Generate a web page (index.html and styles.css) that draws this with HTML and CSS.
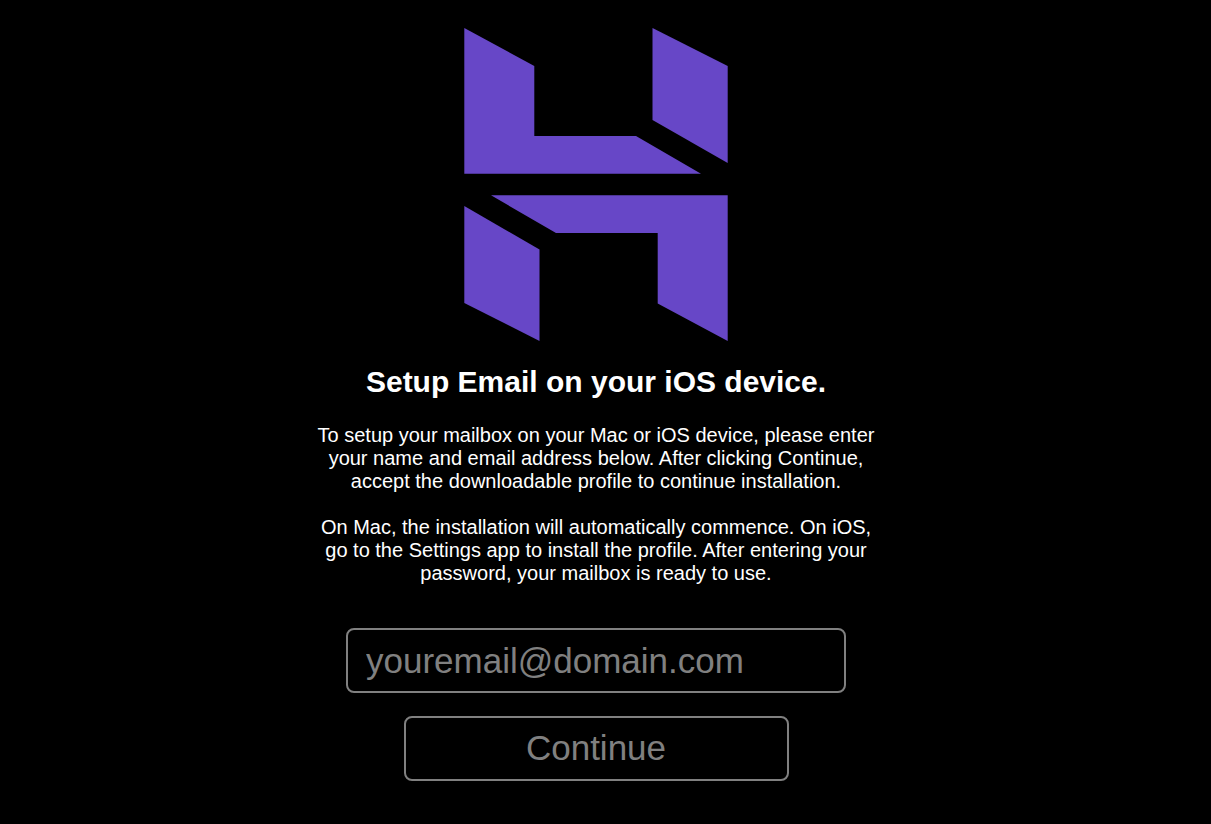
FILE: index.html
```html
<!DOCTYPE html>
<html lang="en">
<head>
<meta charset="utf-8">
<meta name="viewport" content="width=device-width, initial-scale=1">
<title>Setup Email</title>
<link rel="stylesheet" href="styles.css">
</head>
<body>
<main class="page">
  <svg class="logo" viewBox="0 0 264 313" role="img" aria-label="Logo">
    <path d="M0.300 0L70.300 38V108H172L237 145.700H0.300Z"/>
    <path d="M188.500 0L263.700 38V135L188.500 92Z"/>
    <path d="M263.700 313L193.700 275.500V205H92L27 167.300H263.700Z"/>
    <path d="M75.500 313L0.300 275V178L75.500 221.500Z"/>
  </svg>
  <h1 class="title">Setup Email on your iOS device.</h1>
  <p class="text">To setup your mailbox on your Mac or iOS device, please enter your name and email address below. After clicking Continue, accept the downloadable profile to continue installation.</p>
  <p class="text">On Mac, the installation will automatically commence. On iOS, go to the Settings app to install the profile. After entering your password, your mailbox is ready to use.</p>
  <form class="form">
    <input class="field" type="email" placeholder="youremail@domain.com" aria-label="Email address">
    <button class="submit" type="submit">Continue</button>
  </form>
</main>
</body>
</html>
```
FILE: styles.css
```css
* {
  box-sizing: border-box;
}

body {
  margin: 0;
  background: #000;
  color: #fff;
  font-family: "Liberation Sans", Arial, sans-serif;
}

.page {
  display: flex;
  flex-direction: column;
  align-items: center;
  padding: 28px 19px 40px 0;
}

.logo {
  width: 264px;
  fill: #6747c7;
}

.title {
  margin: 24px 0 26px;
  font-size: 30px;
  line-height: 33px;
  text-align: center;
}

.text {
  max-width: 560px;
  margin: 0 0 23px;
  font-size: 20px;
  line-height: 23px;
  text-align: center;
}

.form {
  display: flex;
  flex-direction: column;
  align-items: center;
  gap: 23px;
  width: 100%;
  margin-top: 20px;
}

.field,
.submit {
  height: 65px;
  border: 2px solid #808080;
  border-radius: 8px;
  background: #000;
  color: #808080;
  font-family: inherit;
  font-size: 35px;
}

.field {
  width: 100%;
  max-width: 500px;
  padding: 0 18px;
}

.field::placeholder {
  color: #808080;
}

.submit {
  width: 100%;
  max-width: 385px;
  padding: 0 6px 2px;
}
```
